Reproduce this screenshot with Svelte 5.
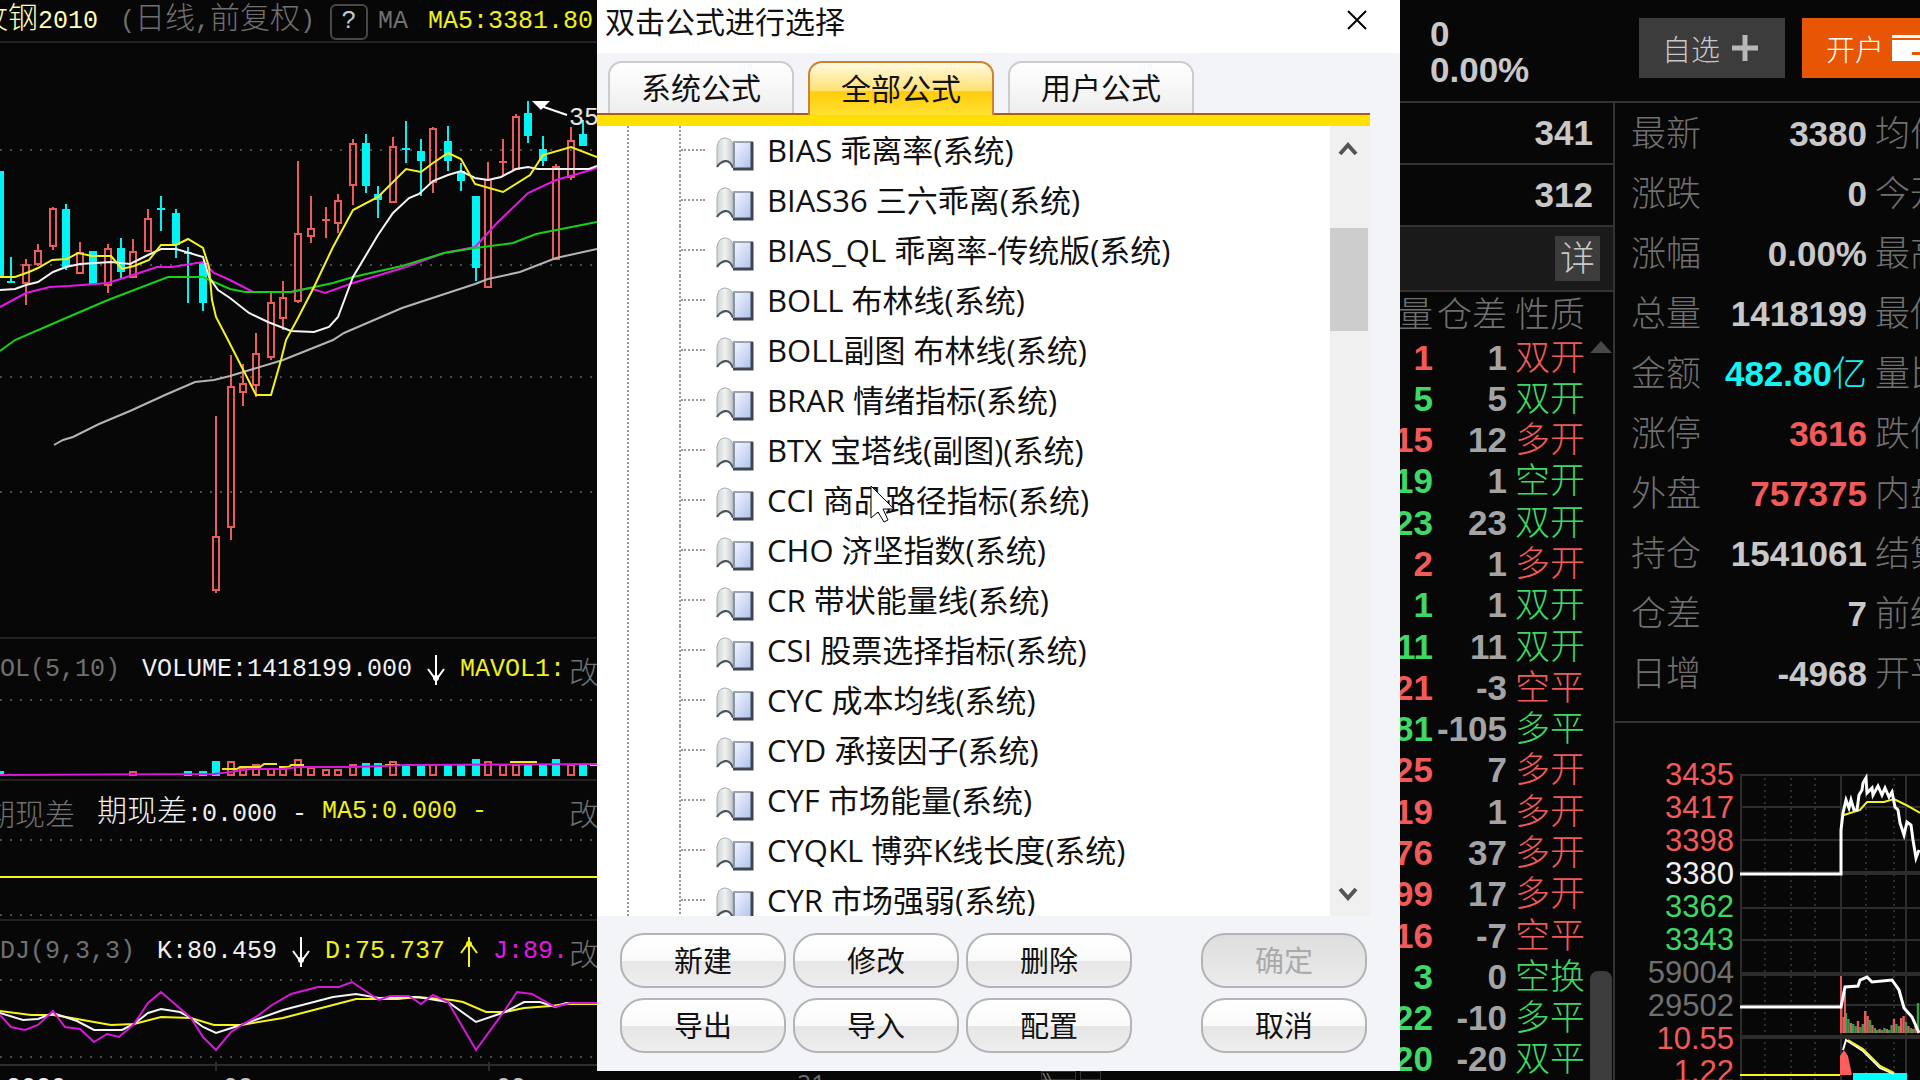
<script>
    let tabs = ['系统公式', '全部公式', '用户公式'];
    let activeTab = '全部公式';

    let formulas = [
        'BIAS 乖离率(系统)',
        'BIAS36 三六乖离(系统)',
        'BIAS_QL 乖离率-传统版(系统)',
        'BOLL 布林线(系统)',
        'BOLL副图 布林线(系统)',
        'BRAR 情绪指标(系统)',
        'BTX 宝塔线(副图)(系统)',
        'CCI 商品路径指标(系统)',
        'CHO 济坚指数(系统)',
        'CR 带状能量线(系统)',
        'CSI 股票选择指标(系统)',
        'CYC 成本均线(系统)',
        'CYD 承接因子(系统)',
        'CYF 市场能量(系统)',
        'CYQKL 博弈K线长度(系统)',
        'CYR 市场强弱(系统)'
    ];

    // x, high, low, body top, body bottom, up (1) or down (0)
    let candles = [
        [0, 171, 277, 171, 277, 0], [11, 257, 283, 282, 283, 0], [26, 259, 305, 265, 283, 1],
        [38, 244, 266, 251, 264, 1], [53, 207, 250, 209, 246, 1], [66, 204, 270, 209, 267, 0],
        [80, 242, 273, 253, 273, 1], [93, 251, 284, 251, 284, 0], [108, 244, 293, 249, 285, 1],
        [121, 238, 278, 248, 272, 0], [133, 239, 277, 252, 277, 1], [148, 209, 251, 219, 251, 1],
        [161, 196, 231, 209, 210, 0], [176, 209, 258, 213, 245, 0], [188, 247, 303, 253, 254, 0],
        [203, 263, 311, 263, 303, 0], [216, 416, 593, 537, 590, 1], [231, 355, 540, 387, 527, 1],
        [243, 364, 406, 384, 392, 1], [256, 333, 397, 354, 385, 1], [271, 293, 360, 303, 357, 1],
        [283, 281, 330, 298, 318, 1], [298, 161, 303, 234, 301, 1], [311, 196, 243, 229, 236, 1],
        [326, 207, 238, 220, 221, 1], [338, 194, 233, 201, 223, 1], [353, 139, 205, 144, 185, 1],
        [366, 134, 193, 143, 186, 0], [378, 186, 218, 194, 200, 0], [393, 137, 202, 147, 202, 1],
        [406, 121, 163, 149, 150, 0], [421, 139, 196, 151, 161, 0], [433, 127, 193, 129, 182, 1],
        [448, 126, 171, 141, 161, 0], [461, 163, 191, 171, 181, 0], [476, 196, 281, 196, 268, 0],
        [488, 162, 287, 180, 287, 1], [503, 139, 175, 162, 163, 1], [516, 114, 169, 117, 169, 1],
        [528, 101, 143, 113, 136, 0], [543, 136, 166, 149, 161, 0], [556, 164, 260, 167, 259, 1],
        [571, 127, 180, 141, 177, 1], [583, 120, 146, 134, 146, 0]
    ];

    let maLines = [
        { color: '#b4b4b4', points: '54,445 63,440 73,437 99,424 130,411 165,395 195,382 214,380 230,376 283,360 333,340 344,333 402,308 475,284 488,279 520,272 556,258 597,249' },
        { color: '#e418e4', points: '0,307 26,293 50,287 69,286 108,283 133,275 157,267 172,267 203,262 214,273 230,280 253,292 268,292 291,292 310,288 325,293 353,283 406,267 444,253 475,247 498,222 528,193 556,180 574,175 597,168' },
        { color: '#16d016', points: '0,351 15,340 66,318 108,300 168,277 203,277 230,289 245,292 291,292 333,283 353,277 402,266 444,253 475,248 513,243 536,234 597,222' },
        { color: '#f4f4f4', points: '0,290 15,289 26,285 38,282 53,272 66,267 80,264 111,262 130,264 148,255 161,249 176,249 203,257 209,277 218,290 230,298 249,313 268,322 291,331 314,332 329,327 338,317 353,277 378,235 393,213 409,198 419,194 433,181 448,175 461,171 475,178 488,180 501,177 516,169 528,167 538,169 589,169 597,166' },
        { color: '#f4f41c', points: '0,277 15,277 29,272 38,268 52,260 67,259 78,253 92,256 111,256 122,269 134,266 149,260 161,245 176,245 188,239 203,248 209,267 212,300 216,317 228,340 256,395 271,395 281,360 286,340 298,318 314,287 333,247 353,210 378,197 406,169 421,172 433,163 448,153 461,159 475,184 503,192 530,175 543,155 571,147 597,157' }
    ];

    // x, top, up (1) or down (0)
    let volumes = [
        [0, 771, 0], [133, 772, 1], [188, 771, 0], [203, 771, 0], [216, 761, 0], [231, 762, 1], [243, 768, 1],
        [256, 765, 1], [271, 769, 1], [283, 769, 1], [298, 760, 1], [311, 768, 1], [326, 770, 1],
        [338, 770, 1], [353, 765, 1], [366, 763, 0], [378, 763, 0], [393, 762, 1], [406, 765, 0],
        [421, 765, 0], [433, 765, 1], [448, 765, 0], [461, 765, 0], [476, 759, 0], [488, 762, 1],
        [503, 765, 1], [516, 765, 1], [528, 765, 0], [543, 765, 0], [556, 759, 0], [571, 765, 1], [583, 765, 0]
    ];

    let kdjLines = [
        { color: '#f4f41c', points: '0,1011 31,1015 53,1015 66,1017 94,1022 111,1025 134,1024 161,1017 191,1018 214,1025 241,1025 283,1018 333,1005 356,999 398,999 417,997 452,1000 463,1002 486,1012 505,1012 524,1008 551,1006 566,1004 597,1004' },
        { color: '#f4f4f4', points: '0,1013 23,1020 38,1019 53,1013 77,1021 94,1030 122,1030 134,1024 148,1013 161,1009 180,1012 191,1018 203,1027 216,1033 241,1025 283,1010 333,997 356,994 379,998 417,997 448,1002 476,1022 505,1012 524,1002 540,1002 555,1007 566,1003 597,1003' },
        { color: '#d818d8', points: '0,1015 11,1027 25,1030 38,1025 53,1011 65,1027 80,1029 94,1042 107,1034 119,1037 134,1024 148,1003 161,992 191,1018 203,1037 216,1050 231,1032 245,1023 256,1017 272,1005 291,994 318,987 339,987 352,982 379,1000 390,996 409,996 421,1004 433,995 448,1002 476,1050 505,1010 517,992 532,994 555,1007 570,1003 597,1003' }
    ];

    // volume, position change, kind, colour class
    let trades = [
        [1, 1, '双开', 'red'], [5, 5, '双开', 'green'], [15, 12, '多开', 'red'],
        [19, 1, '空开', 'green'], [23, 23, '双开', 'green'], [2, 1, '多开', 'red'],
        [1, 1, '双开', 'green'], [11, 11, '双开', 'green'], [21, -3, '空平', 'red'],
        [81, -105, '多平', 'green'], [25, 7, '多开', 'red'], [19, 1, '多开', 'red'],
        [76, 37, '多开', 'red'], [99, 17, '多开', 'red'], [16, -7, '空平', 'red'],
        [3, 0, '空换', 'green'], [22, -10, '多平', 'green'], [20, -20, '双平', 'green']
    ];

    let quotes = [
        ['最新', '3380', '', '', '均价'],
        ['涨跌', '0', '', '', '今开'],
        ['涨幅', '0.00%', '', '', '最高'],
        ['总量', '1418199', '', '', '最低'],
        ['金额', '482.80', '亿', 'cyan', '量比'],
        ['涨停', '3616', '', 'red', '跌停'],
        ['外盘', '757375', '', 'red', '内盘'],
        ['持仓', '1541061', '', '', '结算'],
        ['仓差', '7', '', '', '前结'],
        ['日增', '-4968', '', '', '开平']
    ];

    let scale = [
        ['3435', 'red'], ['3417', 'red'], ['3398', 'red'], ['3380', 'white'], ['3362', 'green'],
        ['3343', 'green'], ['59004', 'grey'], ['29502', 'grey'], ['10.55', 'red'], ['1.22', 'red']
    ];

    let miniBars = [38, 16, 20, 14, 10, 9, 7, 12, 6, 9, 22, 17, 13, 8, 5, 3, 4, 3, 5, 4, 3, 8, 14, 9, 7, 15, 17, 11, 7, 5, 4, 8, 30];
</script>

<main class="screen">
    <section class="charts">
        <header class="head top">
            <span class="name"><b class="han">纹钢</b>2010</span>
            <span class="dim period">(<b class="han">日线</b>,<b class="han">前复权</b>)</span>
            <button class="help">?</button>
            <span class="dim">MA</span>
            <span class="yellow ma">MA5:3381.80</span>
        </header>
        <svg class="price" viewBox="0 43 597 594" preserveAspectRatio="xMidYMin slice">
            {#each [150, 265, 377, 492] as y}
                <line class="dots" x1="0" x2="597" y1={y} y2={y} />
            {/each}
            {#each candles as [x, high, low, top, bottom, up]}
                {#if bottom - top < 2}
                    <path class={up ? 'up' : 'down'} d="M{x} {high}V{low}M{x - 4} {top}H{x + 4}" />
                {:else if up}
                    <path class="up" d="M{x} {high}V{top}M{x} {bottom}V{low}M{x - 3} {top}H{x + 3}V{bottom}H{x - 3}Z" />
                {:else}
                    <path class="down" d="M{x} {high}V{low}" />
                    <rect class="solid" x={x - 4} y={top} width="8" height={bottom - top} />
                {/if}
            {/each}
            {#each maLines as line}
                <polyline points={line.points} stroke={line.color} />
            {/each}
            <path d="M532 101h18l-9 9z" fill="#fff" />
            <path d="M541 106L567 115" stroke="#fff" stroke-width="2" />
            <text x="569" y="125">35</text>
        </svg>

        <header class="head">
            <div class="readout">
                <span class="dim">VOL(5,10)</span>
                <span class="white second">VOLUME:1418199.000</span>
                <svg class="arrow" viewBox="0 0 18 30"><path d="M9 0V30M1 14L9 25L17 14" stroke="#fff" /><circle cx="9" cy="23" r="3" fill="#fff" /></svg>
                <span class="yellow">MAVOL1:</span>
            </div>
            <button class="edit">改</button>
        </header>
        <svg class="volume" viewBox="0 697 597 82" preserveAspectRatio="xMidYMin slice">
            <line class="dots" x1="0" x2="597" y1="700" y2="700" />
            {#each volumes as [x, top, up]}
                {#if up}
                    <rect class="up" x={x - 3} y={top} width="6" height={775 - top} />
                {:else}
                    <rect class="solid" x={x - 4} y={top} width="8" height={776 - top} />
                {/if}
            {/each}
            <path d="M222 769H237L240 767H260L264 764H277M279 767H289L291 765H304M385 765H400M510 762H537M590 765H597" stroke="#f4e41c" stroke-width="2" />
            <polyline points="0,775 214,774 230,772 249,769 283,769 298,767 352,767 383,766 406,765 597,764" stroke="#d818d8" />
        </svg>

        <header class="head">
            <div class="readout">
                <span class="dim han">期现差</span>
                <span class="white second"><b class="han">期现差</b>:0.000 -</span>
                <span class="yellow">MA5:0.000 -</span>
            </div>
            <button class="edit">改</button>
        </header>
        <svg class="spread" viewBox="0 839 597 80" preserveAspectRatio="xMidYMin slice">
            <line class="dots" x1="0" x2="597" y1="840" y2="840" />
            <line x1="0" x2="597" y1="877" y2="877" stroke="#f4f41c" stroke-width="2" />
            <line class="dots" x1="0" x2="597" y1="915" y2="915" />
        </svg>

        <header class="head">
            <div class="readout">
                <span class="dim">KDJ(9,3,3)</span>
                <span class="white second">K:80.459</span>
                <svg class="arrow" viewBox="0 0 18 30"><path d="M9 0V30M1 14L9 25L17 14" stroke="#fff" /><circle cx="9" cy="23" r="3" fill="#fff" /></svg>
                <span class="yellow">D:75.737</span>
                <svg class="arrow" viewBox="0 0 18 30"><path d="M9 0V32M1 16L9 5L17 16" stroke="#f4f41c" /><circle cx="9" cy="7" r="3" fill="#f4f41c" /></svg>
                <span class="magenta">J:89.</span>
            </div>
            <button class="edit">改</button>
        </header>
        <svg class="kdj" viewBox="0 979 597 93" preserveAspectRatio="xMidYMin slice">
            <line class="dots" x1="0" x2="597" y1="980" y2="980" />
            <line class="dots" x1="0" x2="597" y1="1057" y2="1057" />
            <path d="M0 1065H597M216 1062V1071M489 1062V1071" stroke="#2c2c2c" stroke-width="2" />
            {#each kdjLines as line}
                <polyline points={line.points} stroke={line.color} />
            {/each}
        </svg>
        <footer class="dates">
            <span class="white">2020</span>
            <span>08</span>
            <span>09</span>
        </footer>
    </section>

    <section class="middle">
        <div class="dialog" role="dialog" aria-label="双击公式进行选择">
            <header class="title">
                <h1>双击公式进行选择</h1>
                <button class="close" aria-label="关闭">
                    <svg viewBox="0 0 20 20"><path d="M1 1L19 19M19 1L1 19" stroke="#000" stroke-width="2" /></svg>
                </button>
            </header>
            <nav class="tabs">
                {#each tabs as tab}
                    <button class="tab" class:active={tab === activeTab} on:click={() => (activeTab = tab)}>{tab}</button>
                {/each}
            </nav>
            <div class="list">
                <ul>
                    {#each formulas as formula}
                        <li>
                            <span class="branch"></span>
                            <svg class="book" viewBox="0 0 38 34">
                                <defs>
                                    <linearGradient id="page" x1="0" y1="0" x2="1" y2="1">
                                        <stop offset="0" stop-color="#f6f8ff" />
                                        <stop offset="1" stop-color="#a9bdec" />
                                    </linearGradient>
                                    <linearGradient id="flap" x1="0" y1="0" x2="1" y2="0">
                                        <stop offset="0" stop-color="#cfd4d6" />
                                        <stop offset="0.5" stop-color="#f2f3f1" />
                                        <stop offset="1" stop-color="#c3c7c8" />
                                    </linearGradient>
                                </defs>
                                <path d="M1 30V10Q2 2 8 1Q15 1 17 7V31Q14 23 9 25Q4 26 1 30Z" fill="url(#flap)" stroke="#a4acb0" stroke-width="1" />
                                <path d="M1 30Q4 25 9 24Q14 23 17 31" fill="none" stroke="#48545c" stroke-width="2" />
                                <rect x="17" y="5" width="20" height="28" fill="url(#page)" />
                                <path d="M17 5H37" stroke="#9aa4b4" stroke-width="2" />
                                <path d="M36 5V32H17" fill="none" stroke="#3e4450" stroke-width="3" />
                                <path d="M18 6V31" stroke="#8893a8" stroke-width="2" />
                            </svg>
                            <span>{formula}</span>
                        </li>
                    {/each}
                </ul>
                <div class="scrollbar">
                    <button aria-label="向上"><svg viewBox="0 0 20 16"><path d="M2 14L10 5L18 14" /></svg></button>
                    <div class="thumb"></div>
                    <button aria-label="向下"><svg viewBox="0 0 20 16"><path d="M2 2L10 11L18 2" /></svg></button>
                </div>
            </div>
            <div class="actions">
                <button>新建</button>
                <button>修改</button>
                <button>删除</button>
                <button class="last" disabled>确定</button>
                <button>导出</button>
                <button>导入</button>
                <button>配置</button>
                <button class="last">取消</button>
            </div>
            <svg class="cursor" viewBox="0 0 26 38"><path d="M1 1V33L8 27L14 37L18 35L13 24H24Z" fill="#fff" stroke="#000" stroke-width="1" /></svg>
        </div>
        <footer class="strip"><span>21</span><span class="more">》</span><i></i></footer>
    </section>

    <section class="market">
        <header class="summary">
            <div class="change">
                <strong>0</strong>
                <strong>0.00%</strong>
            </div>
            <button class="watch">自选
                <svg viewBox="0 0 26 26"><path d="M13 0V26M0 13H26" stroke="#b8b8b8" stroke-width="5" /></svg>
            </button>
            <button class="account">开户
                <svg viewBox="0 0 34 26"><path d="M0 0H34V3H0ZM0 5H34V26H0Z" fill="#fff" /><path d="M20 17H34V20H20Z" fill="#e85505" /></svg>
            </button>
        </header>

        <div class="columns">
            <div class="ticks">
                <div class="level">341</div>
                <div class="level">312</div>
                <div class="bar"><button>详</button></div>
                <div class="trades">
                    <table>
                        <thead>
                            <tr><th>量</th><th>仓差</th><th>性质</th></tr>
                        </thead>
                        <tbody>
                            {#each trades as [volume, change, kind, tone]}
                                <tr>
                                    <td class={tone}>{volume}</td>
                                    <td>{change}</td>
                                    <td class="kind {tone}">{kind}</td>
                                </tr>
                            {/each}
                        </tbody>
                    </table>
                    <div class="rail">
                        <svg viewBox="0 0 22 12"><path d="M0 12L11 0L22 12Z" fill="#484848" /></svg>
                        <div class="grip"></div>
                    </div>
                </div>
            </div>

            <div class="detail">
                <dl>
                    {#each quotes as [label, value, unit, tone, next]}
                        <dt>{label}</dt>
                        <dd class={tone}>{value}<small>{unit}</small></dd>
                        <dt class="next">{next}</dt>
                    {/each}
                </dl>
                <div class="mini">
                    <div class="scale">
                        {#each scale as [value, tone]}
                            <span class={tone}>{value}</span>
                        {/each}
                    </div>
                    <svg viewBox="1739 758 181 322" preserveAspectRatio="xMinYMin slice">
                        <path class="grid" d="M1741 775V1080M1841 775V1080M1906 775V1080M1740 775H1920M1740 807H1920M1740 840H1920M1740 908H1920M1740 940H1920M1740 1005H1920" />
                        <path class="grid thick" d="M1740 873H1920M1740 974H1920M1740 1037H1920" />
                        <path class="grid dotted" d="M1765 778V1080M1791 778V1080M1815 778V1080M1866 778V1080M1894 778V1080" />
                        {#each miniBars as height, i}
                            <rect x={1840 + i * 2.4} y={1033 - height} width="2.4" height={height} fill={i % 3 === 1 || i === 0 || i === 11 || i === 26 ? '#e85a5a' : '#3c9a50'} />
                        {/each}
                        <path d="M1841 976V1033M1845 992V1033" stroke="#e85a5a" stroke-width="2" />
                        <polyline points="1844,815 1860,810 1867,802 1884,802 1894,799 1906,805 1920,813" stroke="#f4f41c" />
                        <polyline class="bold" points="1740,874 1841,874 1841,830 1843,813 1846,800 1849,808 1851,800 1854,810 1857,810 1859,795 1862,790 1863,783 1866,778 1867,793 1872,788 1873,795 1878,786 1882,795 1885,788 1889,797 1892,792 1895,807 1898,810 1900,823 1904,835 1907,822 1911,825 1913,840 1916,858 1919,850" stroke="#fff" />
                        <polyline points="1740,1007 1841,1007 1845,987 1858,986 1860,980 1867,977 1872,982 1892,980 1899,990 1904,1008 1912,1017 1919,1033" class="bold" stroke="#fff" />
                        <path d="M1840 1075V1056L1844 1050L1848 1056L1852 1075Z" fill="#ff5c5c" />
                        <rect x="1853" y="1073" width="54" height="7" fill="#0ff" />
                        <polyline points="1843,1050 1846,1040 1863,1051 1880,1068 1894,1074" stroke="#fff" />
                        <polyline points="1740,1075 1840,1075" stroke="#f4f41c" />
                        <polyline points="1848,1040 1863,1049 1880,1066 1894,1073" stroke="#f4f41c" />
                    </svg>
                </div>
            </div>
        </div>
    </section>
</main>

<style>
    :global(body) {
        margin: 0;
        background: #070707;
        overflow: hidden;
    }

    .screen {
        display: grid;
        grid-template-columns: minmax(0, 597fr) minmax(0, 803fr) minmax(0, 520fr);
        height: 100vh;
        font-family: "Open Sans", "Noto Sans CJK SC", sans-serif;
        color: #c8c8c8;
    }

    button {
        padding: 0;
        border: none;
        background: none;
        color: inherit;
        font: inherit;
        cursor: pointer;
    }

    svg {
        display: block;
        fill: none;
    }

    polyline {
        stroke-width: 2;
    }

    polyline.bold {
        stroke-width: 3;
    }

    .red { color: #f25a5a; }
    .green { color: #3fd765; }
    .cyan { color: #14f4f4; }
    .white { color: #f0f0f0; }
    .grey, .dim { color: #707070; }
    .yellow { color: #f0f01c; }
    .magenta { color: #e418e4; }

    /* Charts on the left */
    .charts {
        display: flex;
        flex-direction: column;
        overflow: hidden;
        font-family: "Liberation Mono", "Noto Sans CJK SC", monospace;
        font-size: 25px;
        white-space: pre;
    }

    .head {
        box-sizing: border-box;
        display: flex;
        align-items: center;
        flex: none;
        height: 58px;
        margin-left: -15px;
        padding-top: 4px;
        line-height: 34px;
    }

    .readout {
        display: flex;
        align-items: center;
        gap: 15px;
        flex: 1;
        min-width: 0;
        overflow: hidden;
    }

    .head.top {
        align-items: baseline;
        gap: 10px;
        height: 43px;
        margin-left: -22px;
        padding-top: 0;
        line-height: 30px;
        border-bottom: 2px solid #222;
    }

    .head span {
        flex: none;
    }

    .head .second {
        margin-left: 7px;
    }

    .han {
        font-family: "Noto Sans CJK SC", sans-serif;
        font-size: 30px;
        font-weight: 300;
        line-height: 30px;
    }

    .name { color: #ffffb4; }

    .period {
        margin: 0 5px 0 12px;
    }

    .ma {
        margin-left: 10px;
    }

    .help {
        box-sizing: border-box;
        width: 38px;
        height: 36px;
        border: 2px solid #484848;
        border-radius: 6px;
        line-height: 30px;
        flex: none;
    }

    .edit {
        flex: none;
        width: 28px;
        overflow: hidden;
        color: #707070;
        font-family: "Noto Sans CJK SC", sans-serif;
        font-size: 30px;
        font-weight: 300;
        text-align: left;
    }

    .arrow {
        flex: none;
        width: 18px;
        height: 30px;
        stroke-width: 2;
    }

    .price, .volume, .spread, .kdj {
        flex: none;
        width: 100%;
    }

    .price { height: 594px; }
    .volume { height: 82px; }
    .spread { height: 80px; }
    .kdj { height: 93px; }

    .price, .volume, .spread {
        border-bottom: 2px solid #222;
    }

    .price text {
        fill: #e4e4e4;
        font-size: 25px;
    }

    .dots {
        stroke: #4c4c4c;
        stroke-width: 2;
        stroke-dasharray: 2 8;
    }

    .up {
        stroke: #e85c5c;
        stroke-width: 2;
    }

    .down {
        stroke: #00f4f4;
        stroke-width: 2;
    }

    .solid {
        fill: #00f4f4;
    }

    .dates {
        display: grid;
        grid-template-columns: 217px 273px 1fr;
        height: 8px;
        padding-left: 6px;
        line-height: 34px;
        overflow: hidden;
    }

    /* Formula dialog */
    .middle {
        display: flex;
        flex-direction: column;
        height: 100vh;
        overflow: hidden;
    }

    .dialog {
        position: relative;
        display: flex;
        flex-direction: column;
        flex: 1;
        min-height: 0;
        background: #f2f4f7;
        color: #111;
        font-size: 30px;
    }

    .title {
        display: flex;
        justify-content: space-between;
        align-items: flex-start;
        height: 53px;
        padding: 0 33px 0 8px;
        background: #fff;
        line-height: 43px;
    }

    h1 {
        margin: 0;
        font-size: 30px;
        font-weight: 400;
    }

    .close {
        padding-top: 10px;
    }

    .close svg {
        width: 20px;
        height: 20px;
    }

    .tabs {
        display: flex;
        align-items: flex-end;
        gap: 14px;
        height: 60px;
        margin-right: 30px;
        padding-left: 11px;
        border-bottom: 2px solid #b05c10;
        box-shadow: 0 11px #ffe000;
    }

    .tab {
        box-sizing: border-box;
        width: 186px;
        height: 52px;
        border: 2px solid #ccc;
        border-bottom: none;
        border-radius: 14px 14px 0 0;
        background: linear-gradient(#fff, #eee);
        line-height: 50px;
    }

    .tab.active {
        height: 54px;
        margin-bottom: -2px;
        border-color: #d08030;
        background: linear-gradient(#fffae0, #ffe070 54%, #ffcc0c 55%, #ffe030);
    }

    .list {
        display: flex;
        flex: 1;
        min-height: 0;
        margin: 11px 30px 0 0;
        background: #fff;
        overflow: hidden;
        font-size: 31px;
    }

    ul {
        flex: 1;
        margin: 0 0 0 30px;
        padding: 0;
        list-style: none;
        border-left: 2px dotted #999;
        line-height: 48px;
    }

    li {
        box-sizing: border-box;
        display: flex;
        align-items: center;
        height: 50px;
        margin-left: 50px;
        padding-bottom: 2px;
        border-left: 2px dotted #999;
        white-space: nowrap;
    }

    .branch {
        width: 24px;
        margin-right: 11px;
        border-top: 2px dotted #999;
    }

    .book {
        width: 38px;
        height: 34px;
        margin-right: 13px;
        padding-top: 8px;
    }

    .scrollbar {
        display: flex;
        flex-direction: column;
        width: 40px;
        background: #f0f0f0;
    }

    .scrollbar button {
        height: 43px;
        padding-left: 8px;
    }

    .scrollbar svg {
        width: 20px;
        height: 16px;
        stroke: #555;
        stroke-width: 4;
    }

    .thumb {
        width: 38px;
        height: 103px;
        margin: 59px 0 auto;
        background: #cdcdcd;
    }

    .actions {
        display: grid;
        grid-template-columns: repeat(3, 166px) 1fr;
        gap: 10px 7px;
        padding: 17px 33px 18px 23px;
    }

    .actions button {
        box-sizing: border-box;
        width: 166px;
        height: 55px;
        border: 2px solid #b2b4b6;
        border-radius: 24px;
        background: linear-gradient(#fff, #fafafa 50%, #e6e6e6 51%, #eee);
        font-size: 29px;
        line-height: 50px;
    }

    .actions .last {
        justify-self: end;
    }

    .actions button:disabled {
        background: linear-gradient(#dedede, #ebebeb);
        color: #aaa;
    }

    .cursor {
        position: absolute;
        left: 273px;
        top: 485px;
        width: 26px;
        height: 38px;
    }

    .strip {
        display: flex;
        height: 9px;
        padding-left: 200px;
        overflow: hidden;
        color: #707070;
        font-size: 25px;
        line-height: 24px;
    }

    .strip .more {
        width: 33px;
        margin-left: 215px;
        border: 1px solid #333;
    }

    .strip i {
        width: 19px;
        margin-left: 4px;
        border: 1px solid #333;
    }

    /* Market data on the right */
    .market {
        display: flex;
        flex-direction: column;
        height: 100vh;
        overflow: hidden;
        font-family: "Liberation Sans", "Noto Sans CJK SC", sans-serif;
        font-size: 35px;
    }

    .summary {
        display: flex;
        flex: none;
        height: 101px;
        border-bottom: 2px solid #333;
        overflow: hidden;
    }

    .change {
        flex: none;
        width: 209px;
        padding: 16px 0 0 30px;
        line-height: 36px;
    }

    .change strong {
        display: block;
    }

    .watch, .account {
        display: flex;
        align-items: center;
        flex: none;
        gap: 12px;
        height: 60px;
        margin-top: 18px;
        font-size: 29px;
        font-weight: 300;
    }

    .watch {
        width: 146px;
        padding-left: 23px;
        background: #3c3c3c;
    }

    .watch svg {
        width: 26px;
        height: 26px;
    }

    .account {
        gap: 8px;
        margin-left: 17px;
        padding: 0 24px;
        background: #e85505;
        color: #fff;
    }

    .account svg {
        width: 34px;
        height: 26px;
    }

    .columns {
        display: grid;
        grid-template-columns: 215px 1fr;
        flex: 1;
        min-height: 0;
    }

    .ticks {
        display: flex;
        flex-direction: column;
        min-height: 0;
        border-right: 2px solid #333;
    }

    .level {
        height: 60px;
        padding-right: 20px;
        border-bottom: 2px solid #333;
        font-weight: 700;
        line-height: 60px;
        text-align: right;
    }

    .bar {
        display: flex;
        justify-content: flex-end;
        align-items: center;
        height: 63px;
        padding-right: 13px;
        border-bottom: 2px solid #333;
        background: #1a1a1a;
    }

    .bar button {
        width: 45px;
        height: 45px;
        background: #3c3c3c;
        font-size: 35px;
        font-weight: 300;
        line-height: 42px;
    }

    .trades {
        display: flex;
        flex: 1;
        min-height: 0;
    }

    table {
        display: flex;
        flex-direction: column;
        flex: 1;
    }

    tbody {
        display: grid;
        grid-auto-rows: 1fr;
        flex: 1;
        min-height: 0;
    }

    tr {
        display: grid;
        grid-template-columns: 33px 74px 1fr;
        align-items: center;
        min-height: 0;
    }

    th, td {
        display: flex;
        justify-content: flex-end;
        padding: 0;
        line-height: 40px;
        white-space: nowrap;
    }

    th {
        height: 45px;
        align-items: center;
        color: #707070;
        font-size: 35px;
        font-weight: 300;
    }

    td {
        font-weight: 700;
    }

    td:nth-child(2) {
        color: #a4a4a4;
    }

    th:last-child, td.kind {
        justify-content: flex-start;
        padding-left: 8px;
        font-size: 35px;
        font-weight: 300;
    }

    .rail {
        display: flex;
        flex-direction: column;
        width: 22px;
        margin-right: 1px;
        padding-top: 49px;
    }

    .rail svg {
        width: 22px;
        height: 12px;
    }

    .grip {
        height: 109px;
        margin-top: auto;
        border-radius: 8px 8px 0 0;
        background: #3c3c3c;
    }

    .detail {
        min-width: 0;
        overflow: hidden;
    }

    dl {
        display: grid;
        grid-template-columns: 70px 166px 80px;
        grid-auto-rows: 60px;
        margin: 0;
        padding: 1px 0 17px 16px;
        border-bottom: 2px solid #333;
        line-height: 60px;
    }

    dt {
        color: #707070;
        font-size: 35px;
        font-weight: 300;
        white-space: nowrap;
    }

    dt.next {
        padding-left: 8px;
    }

    dd {
        display: flex;
        justify-content: flex-end;
        margin: 0;
        font-weight: 700;
    }

    small {
        font-size: 35px;
        font-weight: 300;
    }

    .mini {
        display: flex;
        padding-top: 35px;
    }

    .scale {
        display: flex;
        flex-direction: column;
        width: 119px;
        font-size: 31px;
        line-height: 33px;
        text-align: right;
    }

    .mini svg {
        flex: 1;
        height: 322px;
        margin-left: 5px;
    }

    .grid {
        stroke: #2c2c2c;
        stroke-width: 2;
    }

    .thick {
        stroke-width: 4;
    }

    .dotted {
        stroke-dasharray: 2 4;
    }
</style>
